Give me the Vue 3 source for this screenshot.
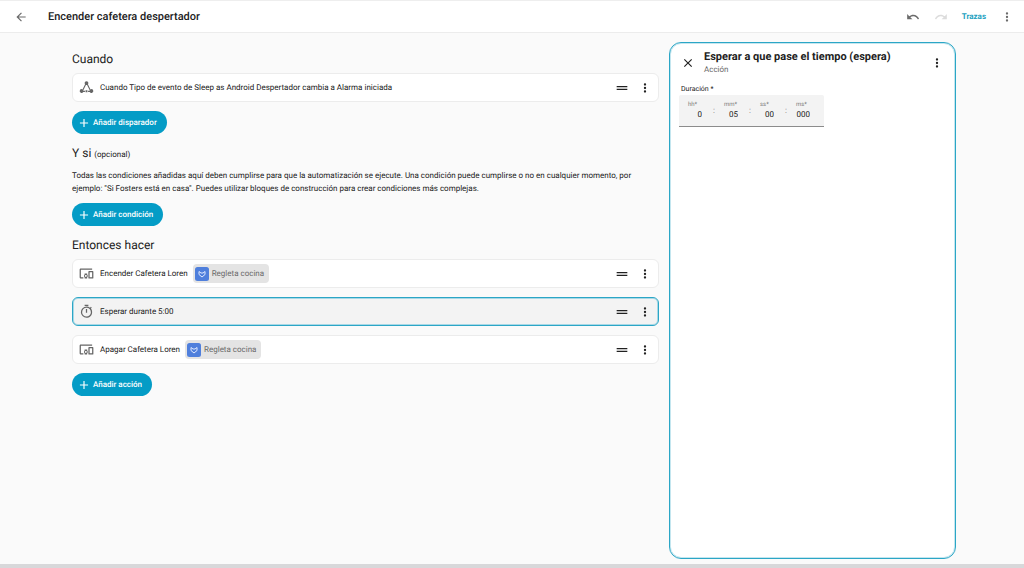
<script setup>
import { computed, ref } from "vue";

const icons = {
  back: "M20,11V13H8L13.5,18.5L12.08,19.92L4.16,12L12.08,4.08L13.5,5.5L8,11H20Z",
  undo: "M12.5,8C9.85,8 7.45,9 5.6,10.6L2,7V16H11L7.38,12.38C8.77,11.22 10.54,10.5 12.5,10.5C16.04,10.5 19.05,12.81 20.1,16L22.47,15.22C21.08,11.03 17.15,8 12.5,8Z",
  redo: "M18.4,10.6C16.55,9 14.15,8 11.5,8C6.85,8 2.92,11.03 1.54,15.22L3.9,16C4.95,12.81 7.95,10.5 11.5,10.5C13.45,10.5 15.23,11.22 16.62,12.38L13,16H22V7L18.4,10.6Z",
  dots: "M12,16A2,2 0 0,1 14,18A2,2 0 0,1 12,20A2,2 0 0,1 10,18A2,2 0 0,1 12,16M12,10A2,2 0 0,1 14,12A2,2 0 0,1 12,14A2,2 0 0,1 10,12A2,2 0 0,1 12,10M12,4A2,2 0 0,1 14,6A2,2 0 0,1 12,8A2,2 0 0,1 10,6A2,2 0 0,1 12,4Z",
  close:
    "M19,6.41L17.59,5L12,10.59L6.41,5L5,6.41L10.59,12L5,17.59L6.41,19L12,13.41L17.59,19L19,17.59L13.41,12L19,6.41Z",
  plus: "M19,13H13V19H11V13H5V11H11V5H13V11H19V13Z",
  drag: "M20,9H4V11H20V9M4,15H20V13H4V15Z",
  trigger:
    "M12,2A3,3 0 0,1 14.3,6.9L18.4,15A3,3 0 1,1 17.2,19H14.5V17H17.2A3,3 0 0,1 17.1,16.4L12.9,7.9A3,3 0 0,1 11.1,7.9L6.9,16.4A3,3 0 0,1 6.8,17H9.5V19H6.8A3,3 0 1,1 5.6,15L9.7,6.9A3,3 0 0,1 12,2M10.5,16.5H13.5V19.5H10.5Z",
  devices:
    "M3 6H21V4H3C1.9 4 1 4.9 1 6V18C1 19.1 1.9 20 3 20H7V18H3V6M13 12H9V13.78C8.39 14.33 8 15.11 8 16C8 16.89 8.39 17.67 9 18.22V20H13V18.22C13.61 17.67 14 16.88 14 16S13.61 14.33 13 13.78V12M11 17.5C10.17 17.5 9.5 16.83 9.5 16S10.17 14.5 11 14.5 12.5 15.17 12.5 16 11.83 17.5 11 17.5M22 8H16C15.5 8 15 8.5 15 9V19C15 19.5 15.5 20 16 20H22C22.5 20 23 19.5 23 19V9C23 8.5 22.5 8 22 8M21 18H17V10H21V18Z",
  timer:
    "M12,20A7,7 0 0,1 5,13A7,7 0 0,1 12,6A7,7 0 0,1 19,13A7,7 0 0,1 12,20M19.03,7.39L20.45,5.97C20,5.46 19.55,5 19.04,4.56L17.62,6C16.07,4.74 14.12,4 12,4A9,9 0 0,0 3,13A9,9 0 0,0 12,22C17,22 21,17.97 21,13C21,10.88 20.26,8.93 19.03,7.39M11,14H13V8H11M15,1H9V3H15V1Z",
};

const selected = ref("wait");

const sections = ref([
  {
    title: "Cuando",
    add: "Añadir disparador",
    rows: [
      {
        id: "alarm",
        icon: "trigger",
        text: "Cuando Tipo de evento de Sleep as Android Despertador cambia a Alarma iniciada",
      },
    ],
  },
  {
    title: "Y si",
    optional: "(opcional)",
    help: 'Todas las condiciones añadidas aquí deben cumplirse para que la automatización se ejecute. Una condición puede cumplirse o no en cualquier momento, por ejemplo: "Si Fosters está en casa". Puedes utilizar bloques de construcción para crear condiciones más complejas.',
    add: "Añadir condición",
    rows: [],
  },
  {
    title: "Entonces hacer",
    add: "Añadir acción",
    rows: [
      {
        id: "on",
        icon: "devices",
        text: "Encender Cafetera Loren",
        device: "Regleta cocina",
      },
      { id: "wait", icon: "timer", text: "Esperar durante 5:00" },
      {
        id: "off",
        icon: "devices",
        text: "Apagar Cafetera Loren",
        device: "Regleta cocina",
      },
    ],
  },
]);

const duration = ref([
  { unit: "hh", value: "0" },
  { unit: "mm", value: "05" },
  { unit: "ss", value: "00" },
  { unit: "ms", value: "000" },
]);

const panelOpen = computed(() => selected.value === "wait");
</script>

<template>
  <div class="page">
    <header class="toolbar">
      <button type="button" class="icon-button muted" aria-label="Volver">
        <svg viewBox="0 0 24 24"><path :d="icons.back" /></svg>
      </button>
      <h1>Encender cafetera despertador</h1>
      <button type="button" class="icon-button muted" aria-label="Deshacer">
        <svg viewBox="0 0 24 24"><path :d="icons.undo" /></svg>
      </button>
      <button
        type="button"
        class="icon-button muted"
        aria-label="Rehacer"
        disabled
      >
        <svg viewBox="0 0 24 24"><path :d="icons.redo" /></svg>
      </button>
      <a href="#trazas" class="traces">Trazas</a>
      <button type="button" class="icon-button muted" aria-label="Menú">
        <svg viewBox="0 0 24 24"><path :d="icons.dots" /></svg>
      </button>
    </header>

    <main class="content">
      <div class="editor">
        <section v-for="section in sections" :key="section.title">
          <h2>
            {{ section.title }}
            <small v-if="section.optional">{{ section.optional }}</small>
          </h2>
          <p v-if="section.help">{{ section.help }}</p>
          <div
            v-for="row in section.rows"
            :key="row.id"
            class="row"
            :class="{ selected: row.id === selected }"
            @click="selected = row.id"
          >
            <svg class="row-icon" viewBox="0 0 24 24">
              <path :d="icons[row.icon]" />
            </svg>
            <span>{{ row.text }}</span>
            <span v-if="row.device" class="chip">
              <svg viewBox="0 0 28 28">
                <rect class="chip-bg" width="28" height="28" rx="5" />
                <path
                  class="chip-logo"
                  d="M8 15V9L12 12H16L20 9V15L14 20L8 15"
                />
              </svg>
              {{ row.device }}
            </span>
            <div class="row-actions">
              <button type="button" class="icon-button drag" aria-label="Mover">
                <svg viewBox="0 0 24 24"><path :d="icons.drag" /></svg>
              </button>
              <button type="button" class="icon-button" aria-label="Opciones">
                <svg viewBox="0 0 24 24"><path :d="icons.dots" /></svg>
              </button>
            </div>
          </div>
          <button type="button" class="add">
            <svg viewBox="0 0 24 24"><path :d="icons.plus" /></svg>
            {{ section.add }}
          </button>
        </section>
      </div>

      <aside v-if="panelOpen" class="panel">
        <div class="panel-header">
          <button
            type="button"
            class="icon-button"
            aria-label="Cerrar"
            @click="selected = ''"
          >
            <svg viewBox="0 0 24 24"><path :d="icons.close" /></svg>
          </button>
          <div class="panel-title">
            <h3>Esperar a que pase el tiempo (espera)</h3>
            <span>Acción</span>
          </div>
          <button type="button" class="icon-button" aria-label="Opciones">
            <svg viewBox="0 0 24 24"><path :d="icons.dots" /></svg>
          </button>
        </div>
        <fieldset>
          <legend>Duración *</legend>
          <div class="duration">
            <template v-for="(field, i) in duration" :key="field.unit">
              <span v-if="i > 0" class="colon">:</span>
              <div class="field">
                <label :for="field.unit">{{ field.unit }}*</label>
                <input :id="field.unit" v-model="field.value" type="text" />
              </div>
            </template>
          </div>
        </fieldset>
      </aside>
    </main>
    <footer class="edge"></footer>
  </div>
</template>

<style>
body {
  margin: 0;
  background: #fafafa;
}
</style>

<style scoped>
.page {
  display: flex;
  flex-direction: column;
  min-height: 100vh;
  font-family: Roboto, "Liberation Sans", sans-serif;
  font-size: 8px;
  color: #212121;
  text-rendering: geometricPrecision;
}

button,
input {
  font: inherit;
  color: inherit;
  text-rendering: inherit;
  border: none;
  padding: 0;
}

h1,
h2,
h3,
p {
  margin: 0;
  font-weight: 400;
}

svg {
  display: block;
  flex: none;
  fill: currentColor;
}

.icon-button {
  flex: none;
  background: none;
  cursor: pointer;
}

.icon-button svg {
  width: 14px;
  height: 14px;
}

.icon-button.drag svg {
  width: 16px;
  height: 16px;
}

.icon-button.muted {
  color: #6b6b6b;
}

.icon-button:disabled {
  color: #dcdcdc;
}

.toolbar {
  display: flex;
  align-items: center;
  gap: 14px;
  height: 31px;
  padding: 0 10px 0 14px;
  background: #fff;
  border-top: 1px solid #eee;
  border-bottom: 1px solid #ececec;
}

.toolbar h1 {
  flex: 1;
  padding-left: 6px;
  font-size: 11px;
  font-weight: 500;
}

.traces {
  color: #1b9fc0;
  font-weight: 700;
  text-decoration: none;
}

.content {
  display: grid;
  flex: 1;
  grid-template-columns: minmax(0, 1fr) 287px;
  gap: 10px;
  padding: 9px 68px 5px 72px;
}

.edge {
  height: 4px;
  background: #d8d8da;
}

.editor {
  display: flex;
  flex-direction: column;
  gap: 10px;
  padding-top: 8px;
}

section {
  display: flex;
  flex-direction: column;
  align-items: flex-start;
  gap: 9px;
}

h2 {
  margin-bottom: -4px;
  font-size: 12px;
  line-height: 18px;
}

h2 small {
  font-size: 8px;
}

p {
  margin-bottom: -1px;
  padding-right: 20px;
  line-height: 13px;
}

.row {
  display: flex;
  align-items: center;
  align-self: stretch;
  box-sizing: border-box;
  height: 29px;
  padding: 0 6px;
  background: #fff;
  border: 1px solid #ececec;
  border-radius: 6px;
}

.row.selected {
  background: #f3f3f3;
  border-color: #2ba6c6;
  box-shadow: inset 0 0 0 1px #a8d8e6;
}

.row-icon {
  width: 15px;
  height: 15px;
  margin-right: 6px;
  color: #666;
}

.row-actions {
  display: flex;
  align-items: center;
  gap: 8px;
  margin-left: auto;
}

.chip {
  display: flex;
  align-items: center;
  gap: 3px;
  height: 19px;
  margin-left: 5px;
  padding: 0 5px 0 2px;
  background: #e4e4e4;
  border-radius: 4px;
  color: #6b6b6b;
}

.chip svg {
  width: 14px;
  height: 14px;
}

.chip-bg {
  fill: #4f7fdc;
}

.chip-logo {
  fill: none;
  stroke: #dfe9ff;
  stroke-width: 2;
}

.add {
  display: flex;
  align-items: center;
  gap: 2px;
  height: 23px;
  padding: 0 10px 0 5px;
  background: #049cc6;
  border-radius: 12px;
  color: #fff;
  font-weight: 500;
  cursor: pointer;
}

.add svg {
  width: 14px;
  height: 14px;
}

.panel {
  box-sizing: border-box;
  padding: 7px 9px;
  background: #fff;
  border: 1px solid #2ba6c6;
  border-radius: 12px;
  box-shadow: inset 0 0 0 1px #c4e6ef;
}

.panel-header {
  display: flex;
  align-items: center;
  gap: 9px;
  padding: 0 2px;
}

.panel-title {
  flex: 1;
  color: #6b6b6b;
  line-height: 12px;
}

.panel-title span {
  display: block;
}

.panel-title h3 {
  color: #212121;
  font-size: 11px;
  font-weight: 700;
  line-height: 14px;
}

fieldset {
  margin: 7px 0 0;
  padding: 0;
  border: none;
}

legend {
  padding: 0 2px;
  font-size: 7px;
  line-height: 12px;
}

.duration {
  display: inline-flex;
  align-items: center;
  height: 31px;
  padding: 0 14px 0 3px;
  background: #f3f3f3;
  border-bottom: 1px solid #8c8c8c;
  border-radius: 2px 2px 0 0;
}

.field {
  width: 20px;
}

.field label {
  display: block;
  padding-left: 6px;
  color: #7a7a7a;
  font-size: 6px;
  line-height: 8px;
}

.field input {
  display: block;
  width: 100%;
  height: 11px;
  background: none;
  outline: none;
  text-align: right;
}

.colon {
  width: 16px;
  padding-left: 11px;
  box-sizing: border-box;
  color: #7a7a7a;
}
</style>
